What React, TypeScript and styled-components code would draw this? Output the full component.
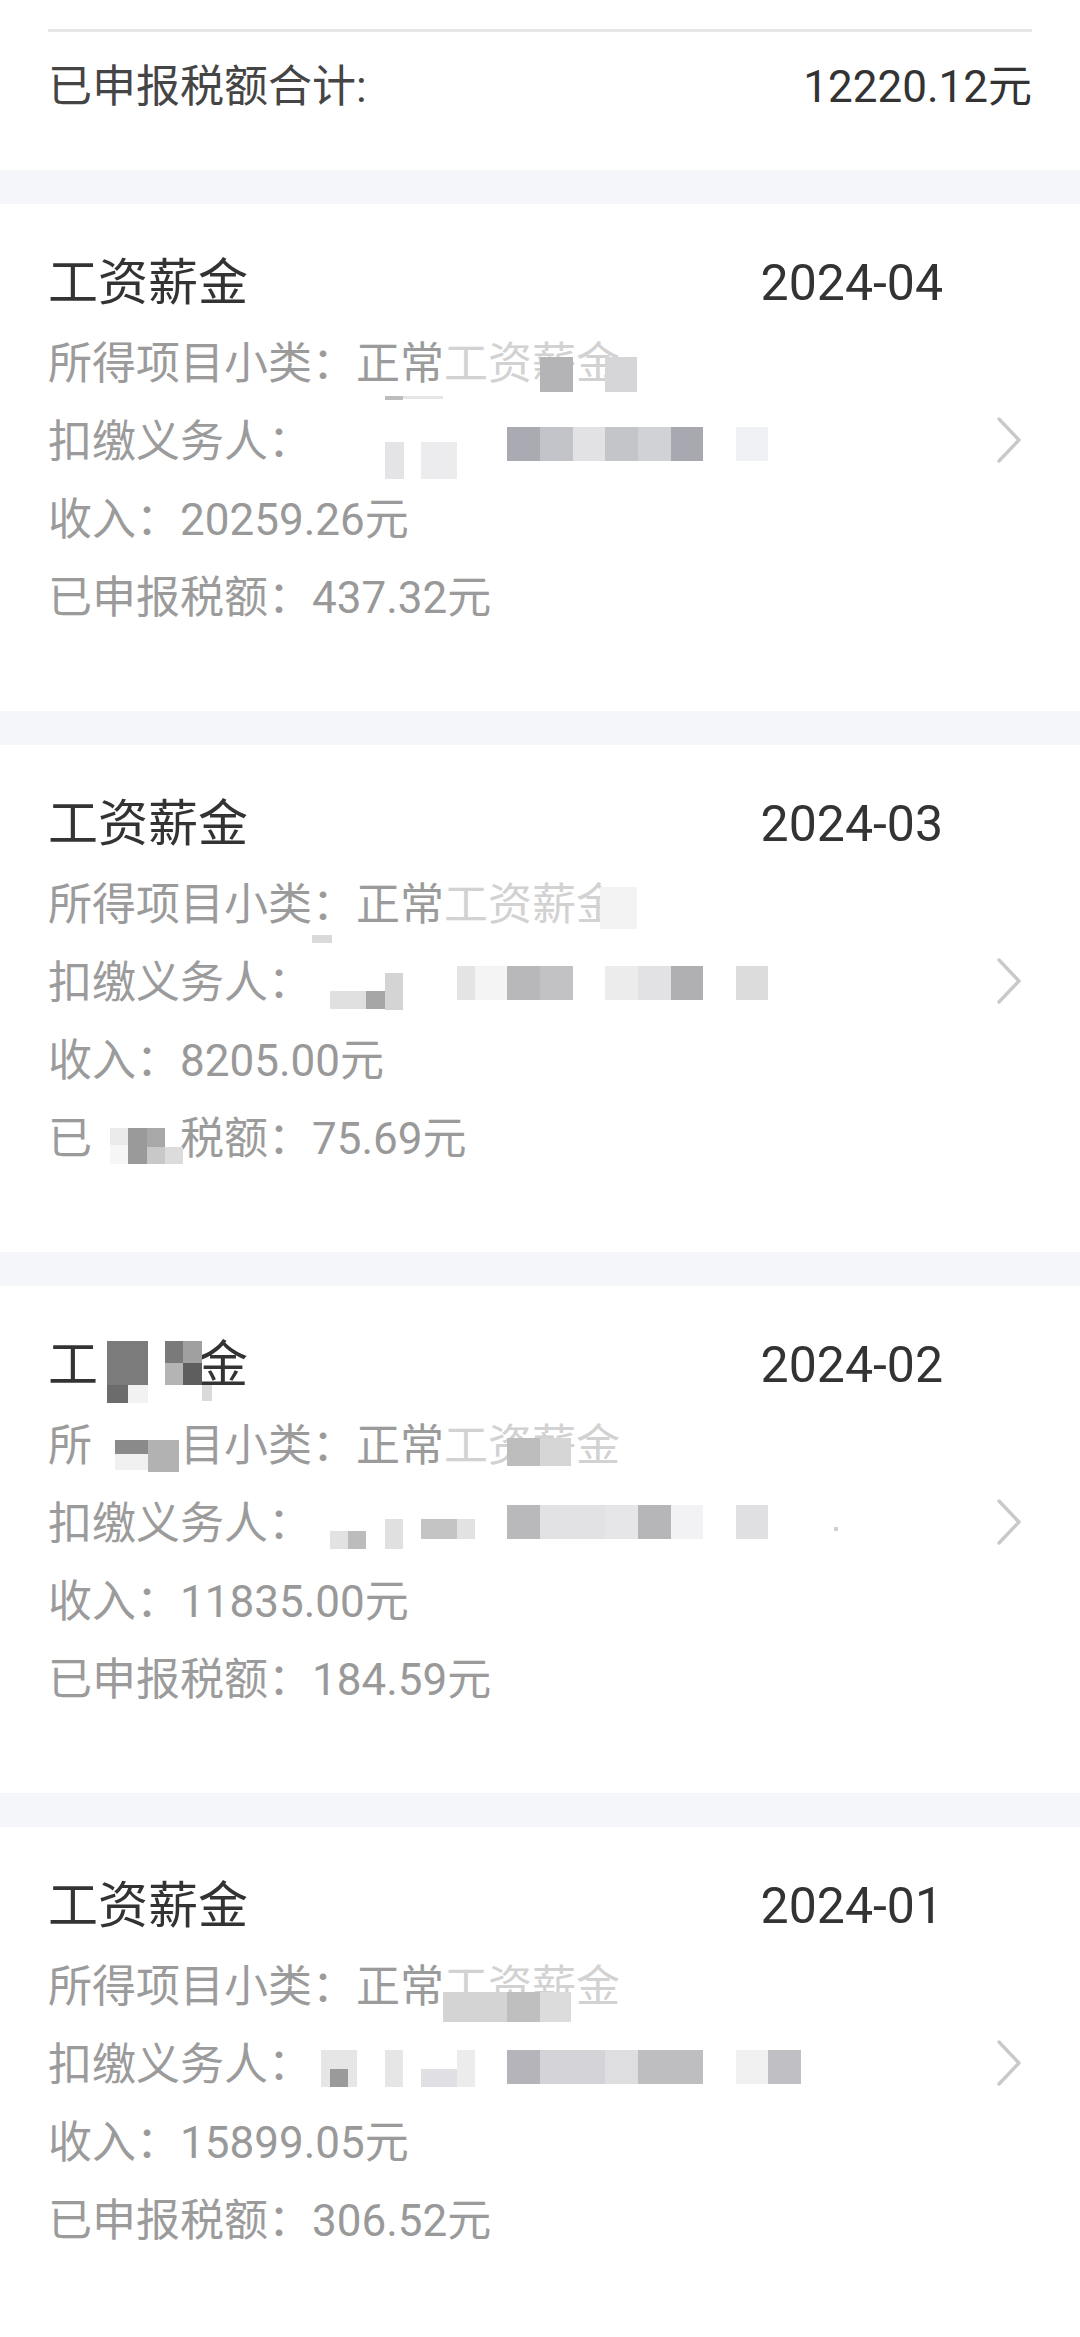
import React from 'react';
import styled, { createGlobalStyle } from 'styled-components';

type Cell = [number, number, number, number, number, string];
// [row, x, dy, w, h, color] — row 0 is the title line, 1..4 the detail lines

type Record = {
  period: string;
  income: string;
  tax: string;
  titleMasked?: boolean;
  subtypeMasked?: boolean;
  taxMasked?: boolean;
  cells: Cell[];
};

const ROW_CENTERS = [77, 160, 238, 316, 394];

const records: Record[] = [
  {
    period: '2024-04',
    income: '20259.26',
    tax: '437.32',
    cells: [
      [1, 540, -7, 33, 35, '#b4b4b6'],
      [1, 605, -7, 32, 35, '#d6d6d8'],
      [1, 385, 32, 18, 4, '#bdbdbd'],
      [1, 403, 32, 40, 3, '#e6e6e6'],
      [2, 385, 0, 19, 37, '#e4e4e6'],
      [2, 421, 0, 36, 37, '#ececee'],
      [2, 507, -15, 33, 34, '#a9aab2'],
      [2, 540, -15, 33, 34, '#c2c3c8'],
      [2, 573, -15, 32, 34, '#e2e2e5'],
      [2, 605, -15, 33, 34, '#c4c5c9'],
      [2, 638, -15, 33, 34, '#d1d2d5'],
      [2, 671, -15, 32, 34, '#a8a9b0'],
      [2, 736, -15, 32, 34, '#eff0f3'],
    ],
  },
  {
    period: '2024-03',
    income: '8205.00',
    tax: '75.69',
    taxMasked: true,
    cells: [
      [1, 312, 30, 20, 8, '#dadada'],
      [1, 600, -18, 37, 42, '#f3f3f3'],
      [2, 330, 8, 36, 18, '#e0e0e0'],
      [2, 366, 8, 19, 18, '#a6a6a6'],
      [2, 385, -10, 18, 37, '#d4d4d4'],
      [2, 457, -17, 18, 34, '#e4e4e4'],
      [2, 475, -17, 32, 34, '#f4f4f4'],
      [2, 507, -17, 33, 34, '#b8b8ba'],
      [2, 540, -17, 33, 34, '#c2c2c4'],
      [2, 605, -17, 33, 34, '#ececec'],
      [2, 638, -17, 33, 34, '#e2e2e4'],
      [2, 671, -17, 32, 34, '#b0b0b2'],
      [2, 736, -17, 32, 34, '#dcdcdc'],
      [4, 110, -11, 18, 17, '#ebebeb'],
      [4, 110, 6, 18, 19, '#f6f6f6'],
      [4, 128, -11, 19, 36, '#9a9a9a'],
      [4, 147, -11, 18, 19, '#a8a8a8'],
      [4, 147, 8, 18, 17, '#c8c8c8'],
      [4, 165, 8, 18, 17, '#dcdcdc'],
    ],
  },
  {
    period: '2024-02',
    income: '11835.00',
    tax: '184.59',
    titleMasked: true,
    subtypeMasked: true,
    cells: [
      [0, 107, -22, 41, 44, '#7b7b7b'],
      [0, 107, 22, 21, 18, '#6c6c6c'],
      [0, 128, 22, 20, 18, '#f2f2f2'],
      [0, 165, -22, 18, 22, '#7a7a7a'],
      [0, 183, -22, 19, 22, '#a0a0a0'],
      [0, 165, 0, 18, 22, '#b4b4b4'],
      [0, 183, 0, 19, 22, '#5e5e5e'],
      [0, 202, 22, 10, 16, '#dadada'],
      [1, 115, -6, 33, 14, '#8a8a8a'],
      [1, 115, 8, 33, 16, '#f0f0f0'],
      [1, 148, -6, 31, 32, '#b2b2b2'],
      [1, 507, -8, 33, 28, '#bdbdbd'],
      [1, 540, -8, 31, 28, '#d6d6d6'],
      [2, 330, 7, 18, 18, '#e2e2e2'],
      [2, 348, 7, 18, 18, '#bcbcbc'],
      [2, 385, -5, 18, 30, '#e0e0e0'],
      [2, 421, -5, 36, 20, '#c4c4c4'],
      [2, 457, -5, 18, 20, '#e2e2e2'],
      [2, 507, -19, 33, 34, '#b9b9bb'],
      [2, 540, -19, 65, 34, '#e2e2e4'],
      [2, 605, -19, 33, 34, '#e6e6e8'],
      [2, 638, -19, 33, 34, '#b6b6b8'],
      [2, 671, -19, 32, 34, '#f2f2f4'],
      [2, 736, -19, 32, 34, '#e0e0e2'],
      [2, 834, 3, 4, 4, '#d0d0d0'],
    ],
  },
  {
    period: '2024-01',
    income: '15899.05',
    tax: '306.52',
    cells: [
      [1, 443, 5, 64, 30, '#d4d4d4'],
      [1, 507, 5, 33, 30, '#bfbfbf'],
      [1, 540, 5, 31, 30, '#dcdcdc'],
      [2, 321, -15, 36, 37, '#e6e6e6'],
      [2, 330, 4, 18, 18, '#9a9a9a'],
      [2, 385, -15, 18, 37, '#e6e6e6'],
      [2, 421, 4, 36, 18, '#e0e0e4'],
      [2, 457, -15, 18, 37, '#ececec'],
      [2, 507, -15, 33, 34, '#b4b4ba'],
      [2, 540, -15, 65, 34, '#d4d4d8'],
      [2, 605, -15, 33, 34, '#dedee0'],
      [2, 638, -15, 65, 34, '#bebec0'],
      [2, 736, -15, 32, 34, '#f0f0f0'],
      [2, 768, -15, 33, 34, '#c0c0c4'],
    ],
  },
];

const Mosaic = ({ cells }: { cells: Cell[] }) => (
  <Overlay viewBox='0 0 1080 507' width={1080} height={507}>
    {cells.map(([row, x, dy, w, h, c], i) => (
      <rect key={i} x={x} y={ROW_CENTERS[row] + dy} width={w} height={h} fill={c} />
    ))}
  </Overlay>
);

const Chevron = () => (
  <ChevronIcon viewBox='0 0 28 50' width={28} height={50}>
    <polyline
      points='4,4 24,25 4,46'
      fill='none'
      stroke='#c9c9c9'
      strokeWidth={3.4}
      strokeLinecap='round'
      strokeLinejoin='round'
    />
  </ChevronIcon>
);

const App = () => {
  return (
    <>
      <GlobalStyle />
      <Page>
        <Summary>
          <Divider />
          <SummaryRow>
            <span>已申报税额合计:</span>
            <Amount>12220.12元</Amount>
          </SummaryRow>
        </Summary>

        {records.map((item) => (
          <Card key={item.period}>
            <Content>
              <TitleRow>
                {item.titleMasked ? (
                  <span>
                    工<Hidden>资薪</Hidden>金
                  </span>
                ) : (
                  <span>工资薪金</span>
                )}
                <Period>{item.period}</Period>
              </TitleRow>
              <Field>
                {item.subtypeMasked ? (
                  <>
                    所<Hidden>得项</Hidden>目小类：
                  </>
                ) : (
                  '所得项目小类：'
                )}
                正常<Fade>工资薪金</Fade>
              </Field>
              <Field>扣缴义务人：</Field>
              <Field>
                收入：<Num>{item.income}</Num>元
              </Field>
              <Field>
                {item.taxMasked ? (
                  <>
                    已<Hidden>申报</Hidden>税额：
                  </>
                ) : (
                  '已申报税额：'
                )}
                <Num>{item.tax}</Num>元
              </Field>
            </Content>
            <Chevron />
            <Mosaic cells={item.cells} />
          </Card>
        ))}
      </Page>
    </>
  );
};

const GlobalStyle = createGlobalStyle`
  html, body {
    margin: 0;
    padding: 0;
    background: #fff;
  }

  body {
    font-family: Roboto, 'Noto Sans CJK SC', sans-serif;
    -webkit-font-smoothing: antialiased;
  }
`;

const Page = styled.div`
  width: 1080px;
  display: flex;
  flex-direction: column;
  gap: 34px;
  background: #f5f6fa;
`;

const Summary = styled.div`
  height: 170px;
  box-sizing: border-box;
  padding: 29px 48px 0;
  background: #fff;
`;

const Divider = styled.div`
  height: 3px;
  background: #e6e6e8;
`;

const SummaryRow = styled.div`
  display: flex;
  justify-content: space-between;
  align-items: center;
  margin-top: 21px;
  height: 60px;
  font-size: 44px;
  color: #454545;
`;

const Amount = styled.span`
  color: #333;
`;

const Card = styled.div`
  position: relative;
  height: 507px;
  box-sizing: border-box;
  padding: 49px 57px 0 48px;
  display: flex;
  align-items: flex-start;
  background: #fff;

  &:last-child {
    height: 510px;
  }
`;

const Content = styled.div`
  flex: 1;
  min-width: 0;
`;

const TitleRow = styled.div`
  display: flex;
  justify-content: space-between;
  align-items: center;
  height: 60px;
  margin-bottom: 12px;
  font-size: 50px;
  line-height: 60px;
  color: #333;
`;

const Period = styled.span`
  font-family: Roboto, sans-serif;
  color: #333;
`;

const Field = styled.div`
  height: 78px;
  font-size: 44px;
  line-height: 78px;
  color: #9b9b9b;
  white-space: nowrap;
`;

const Num = styled.span`
  font-family: Roboto, sans-serif;
  color: #999;
`;

const Fade = styled.span`
  color: #d2d2d2;
`;

const Hidden = styled.span`
  color: transparent;
`;

const ChevronIcon = styled.svg`
  flex: none;
  margin-left: 52px;
  margin-top: 162px;
`;

const Overlay = styled.svg`
  position: absolute;
  top: 0;
  left: 0;
  pointer-events: none;
`;

export default App;
